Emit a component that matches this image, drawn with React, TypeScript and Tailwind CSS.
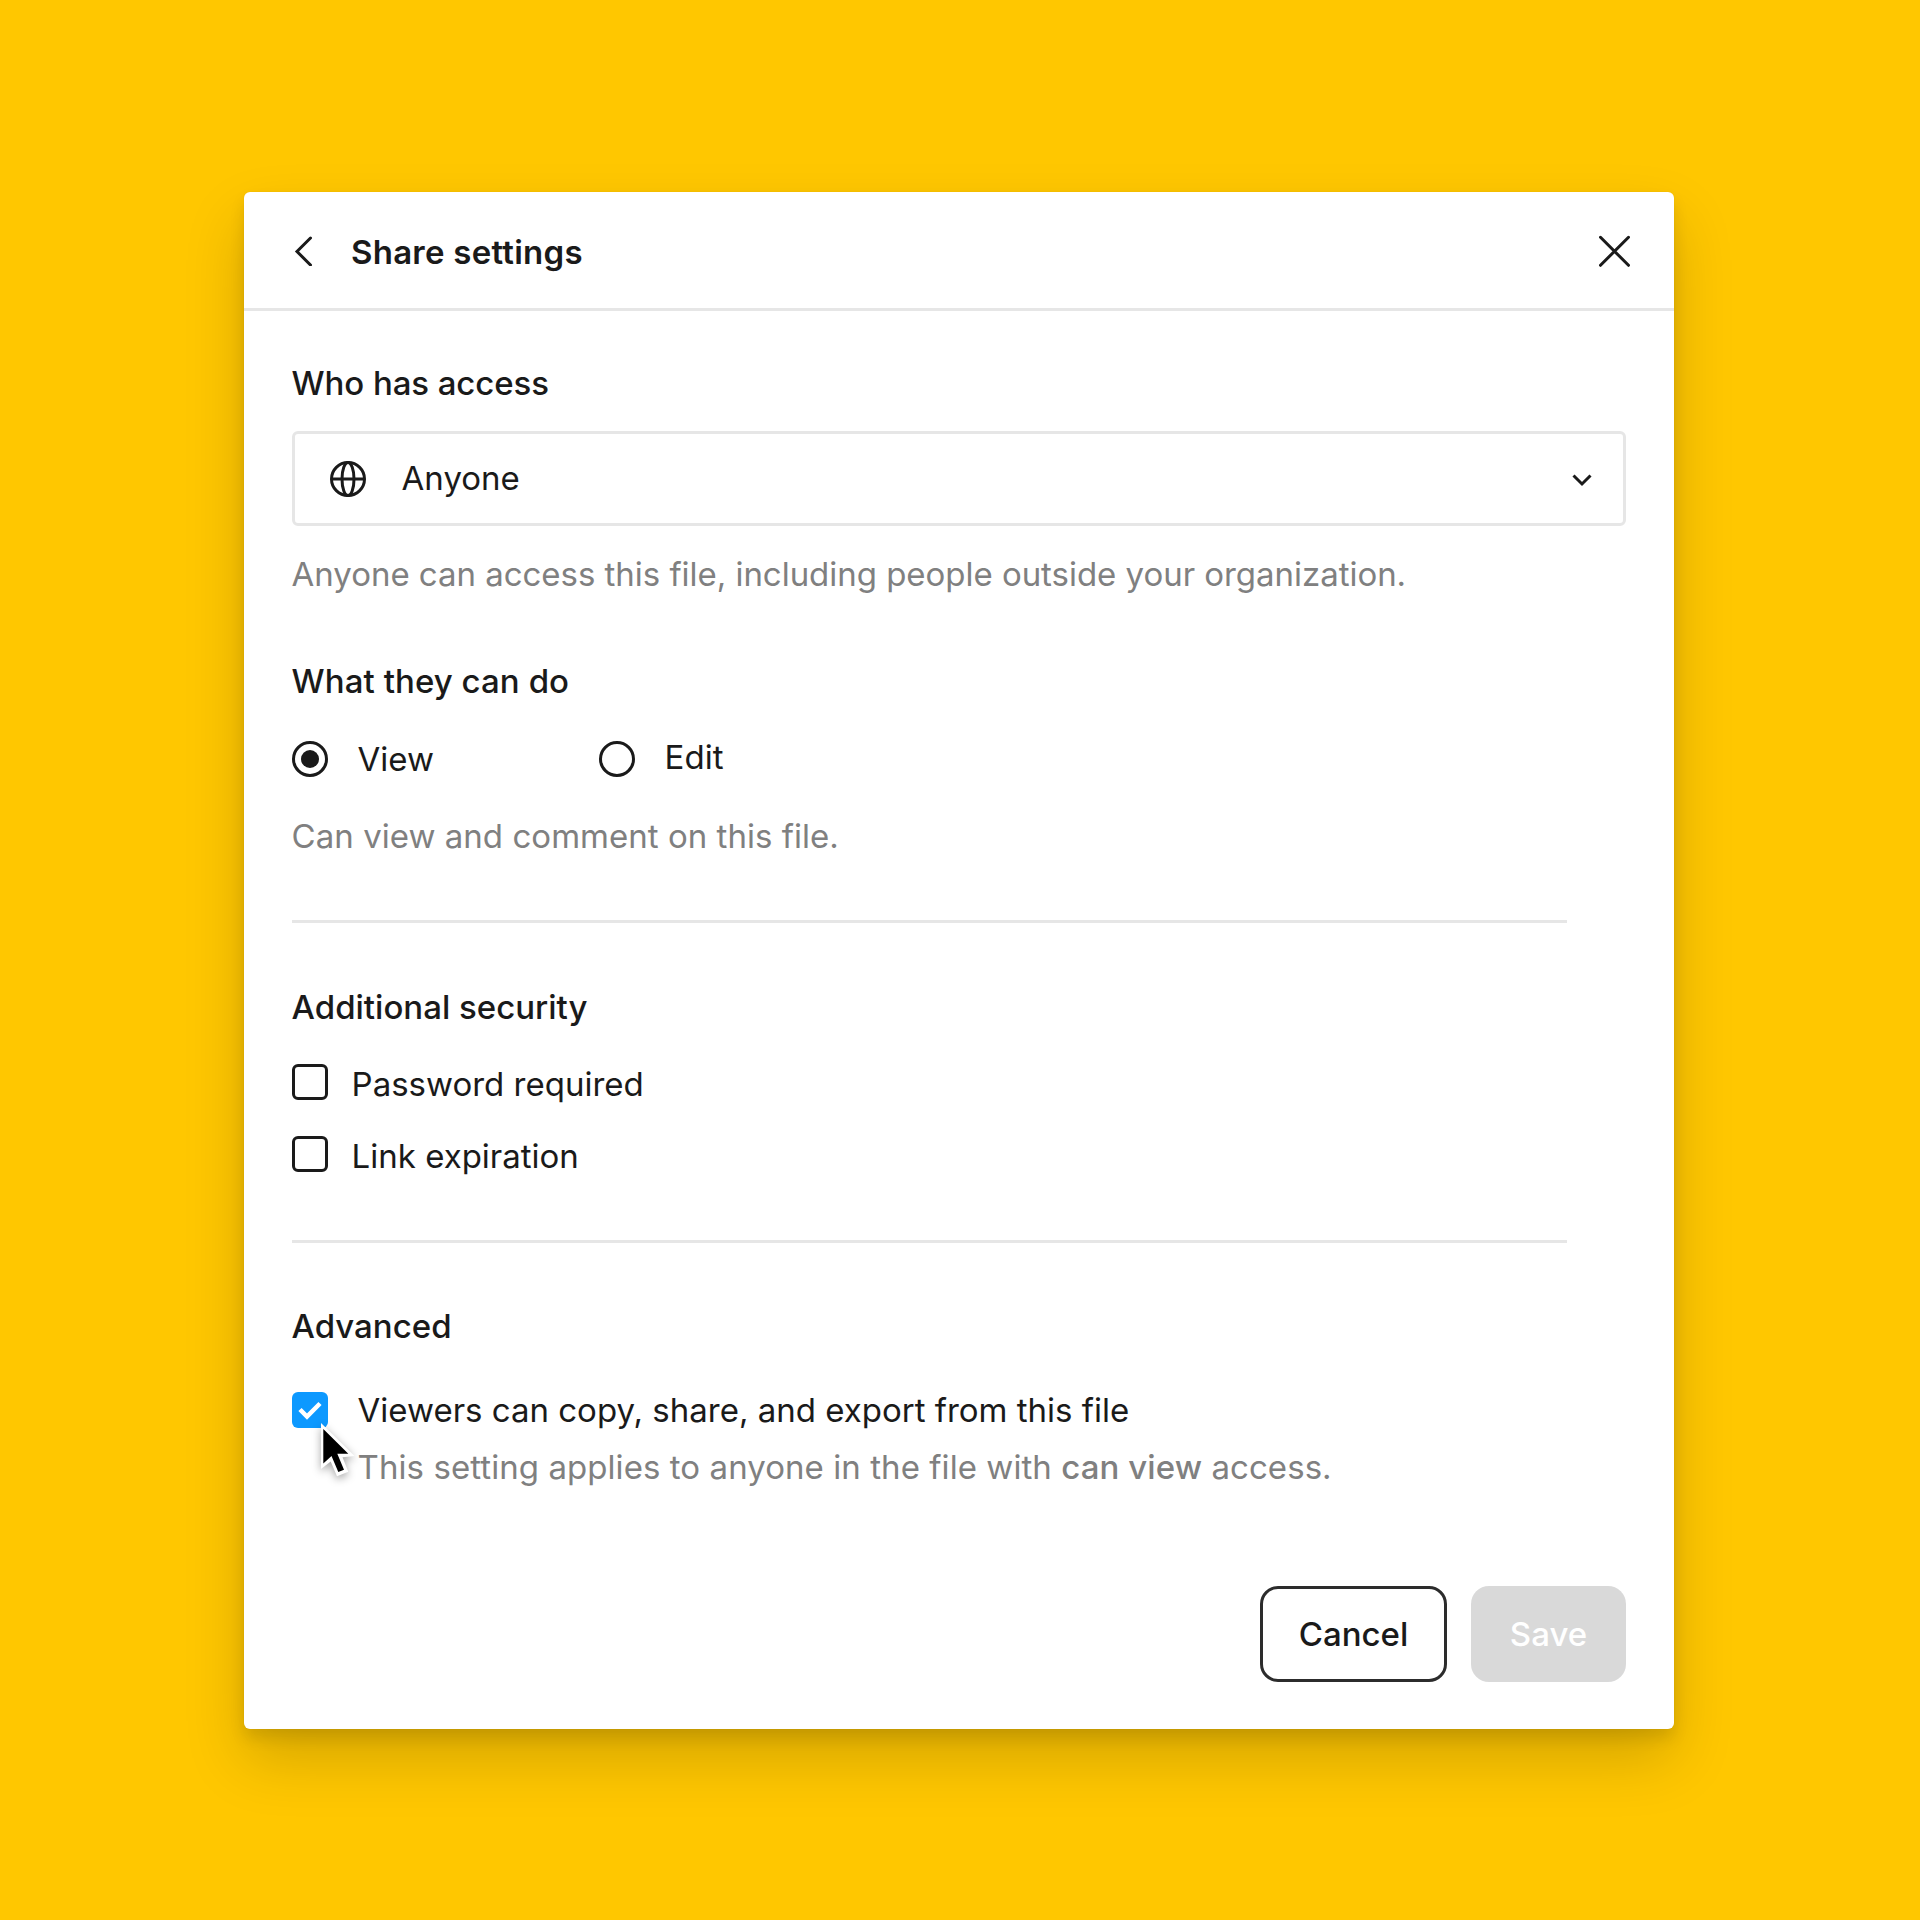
import { useState } from "react";
import type { ReactNode } from "react";

const Label = ({ children }: { children: ReactNode }) => (
  <h3 className="font-medium leading-12">{children}</h3>
);

const Hint = ({ children }: { children: ReactNode }) => (
  <p className="leading-12 text-[#808080]">{children}</p>
);

const Divider = () => <div className="h-[3px] w-[1275px] bg-[#e6e6e6]" />;

const Radio = ({ checked }: { checked: boolean }) => (
  <span className="flex h-9 w-9 shrink-0 items-center justify-center rounded-full border-3 border-[#1a1a1a]">
    {checked && <span className="h-[18px] w-[18px] rounded-full bg-[#1a1a1a]" />}
  </span>
);

const GlobeIcon = () => (
  <svg width="36" height="36" viewBox="0 0 36 36" fill="none" stroke="#1a1a1a" strokeWidth="3">
    <circle cx="18" cy="18" r="16.5" />
    <ellipse cx="18" cy="18" rx="6" ry="16.5" />
    <path d="M1.5 18h33" />
  </svg>
);

// Arrow pointer resting on the checked box
const Cursor = () => (
  <svg
    className="absolute left-[21px] top-[19px] drop-shadow-[0_3px_4px_rgba(0,0,0,0.35)]"
    width="50"
    height="68"
    viewBox="0 0 50 68"
  >
    <path d="M8 12 41.500 45l-12 1.300 5.800 14.400L24 65.300l-6.300-14.800L8 58z" fill="#fff" />
    <path d="M10.300 18 35.300 42.700h-11L31 58.700 25.300 61 18.500 45l-8.200 7.500z" fill="#000" />
  </svg>
);

const securityOptions = [
  { id: "password", name: "Password required" },
  { id: "expiration", name: "Link expiration" },
];

export default function App() {
  const [permission, setPermission] = useState("view");

  return (
    <div className="flex h-[1920px] w-[1920px] items-start bg-[#ffc700] pl-[244px] pt-48 font-['Inter',sans-serif] text-[33px] text-[#1a1a1a]">
      <div className="h-[1537px] w-[1430px] rounded-md bg-white shadow-[0_0_1.5px_rgba(0,0,0,0.08),0_9px_15px_rgba(0,0,0,0.1),0_30px_60px_rgba(0,0,0,0.17)]">
        <header className="flex h-[119px] items-center border-b-3 border-[#e6e6e6] pl-[50px] pr-[43px]">
          <svg className="mt-px" width="19" height="30" viewBox="0 0 19 30" fill="none" stroke="#1a1a1a" strokeWidth="3" strokeLinecap="round">
            <path d="M16.500 2 3 15.500 16.500 29" />
          </svg>
          <h2 className="ml-[38px] mt-[3px] font-semibold leading-12 tracking-[0.0075em]">Share settings</h2>
          <svg className="ml-auto mt-px" width="32" height="32" viewBox="0 0 32 32" fill="none" stroke="#1a1a1a" strokeWidth="3" strokeLinecap="round">
            <path d="m1.500 2.300 28 28M29.500 2.300l-28 28" />
          </svg>
        </header>

        <div className="flex flex-col pl-[47.6px] pr-12 pt-12">
          <div className="tracking-[-0.003em]">
            <Label>Who has access</Label>
          </div>
          <button className="mt-6 flex h-[95px] w-[1334px] items-center rounded-md border-3 border-[#e6e6e6] pl-[35px] pr-[31px]">
            <GlobeIcon />
            <span className="-mt-px ml-[36px] leading-12">Anyone</span>
            <svg className="ml-auto mt-[3px]" width="20" height="14" viewBox="0 0 20 14" fill="none" stroke="#1a1a1a" strokeWidth="3">
              <path d="m1.500 2.500 8.500 8.500 8.500-8.500" />
            </svg>
          </button>
          <div className="mt-6 tracking-[-0.001em]">
            <Hint>Anyone can access this file, including people outside your organization.</Hint>
          </div>

          <div className="mt-[59px] tracking-[0.002em]">
            <Label>What they can do</Label>
          </div>
          <div className="mt-[30px] flex h-12 items-center">
            <button className="flex w-[307px] items-center gap-[30px]" onClick={() => setPermission("view")}>
              <Radio checked={permission === "view"} />
              <span className="leading-12">View</span>
            </button>
            <button className="flex items-center gap-[30px]" onClick={() => setPermission("edit")}>
              <Radio checked={permission === "edit"} />
              <span className="-mt-1 leading-12">Edit</span>
            </button>
          </div>
          <div className="mt-[29px] mb-[60px] tracking-[0.001em]">
            <Hint>Can view and comment on this file.</Hint>
          </div>
          <Divider />

          <div className="mt-[60px]">
            <Label>Additional security</Label>
          </div>
          <div className="mt-[29px] mb-[60px] flex flex-col gap-6">
            {securityOptions.map((option) => (
              <div key={option.id} className="flex h-12 items-center gap-6">
                <span className="-mt-[4px] h-9 w-9 rounded-md border-3 border-[#1a1a1a]" />
                <span className="leading-12">{option.name}</span>
              </div>
            ))}
          </div>
          <Divider />

          <div className="mt-[59px]">
            <Label>Advanced</Label>
          </div>
          <div className="mt-[36px] flex h-12 items-center gap-[30px]">
            <span className="relative flex h-9 w-9 items-center justify-center rounded-md bg-[#0d99ff]">
              <svg width="24" height="19" viewBox="0 0 24 19" fill="none" stroke="#fff" strokeWidth="4.500">
                <path d="m2 8.500 7 7L22 2.500" />
              </svg>
              <Cursor />
            </span>
            <span className="leading-12">Viewers can copy, share, and export from this file</span>
          </div>
          <div className="mt-[9px] pl-[66px] tracking-[0.002em]">
            <Hint>
              This setting applies to anyone in the file with <b className="font-medium">can view</b> access.
            </Hint>
          </div>

          <div className="mt-[95px] flex justify-end gap-6 font-medium">
            <button className="h-24 w-[187px] rounded-[18px] border-3 border-[#2c2c2c] pt-0.5">Cancel</button>
            <button className="h-24 w-[155px] rounded-[18px] bg-[#d9d9d9] pt-0.5 text-white">Save</button>
          </div>
        </div>
      </div>
    </div>
  );
}
